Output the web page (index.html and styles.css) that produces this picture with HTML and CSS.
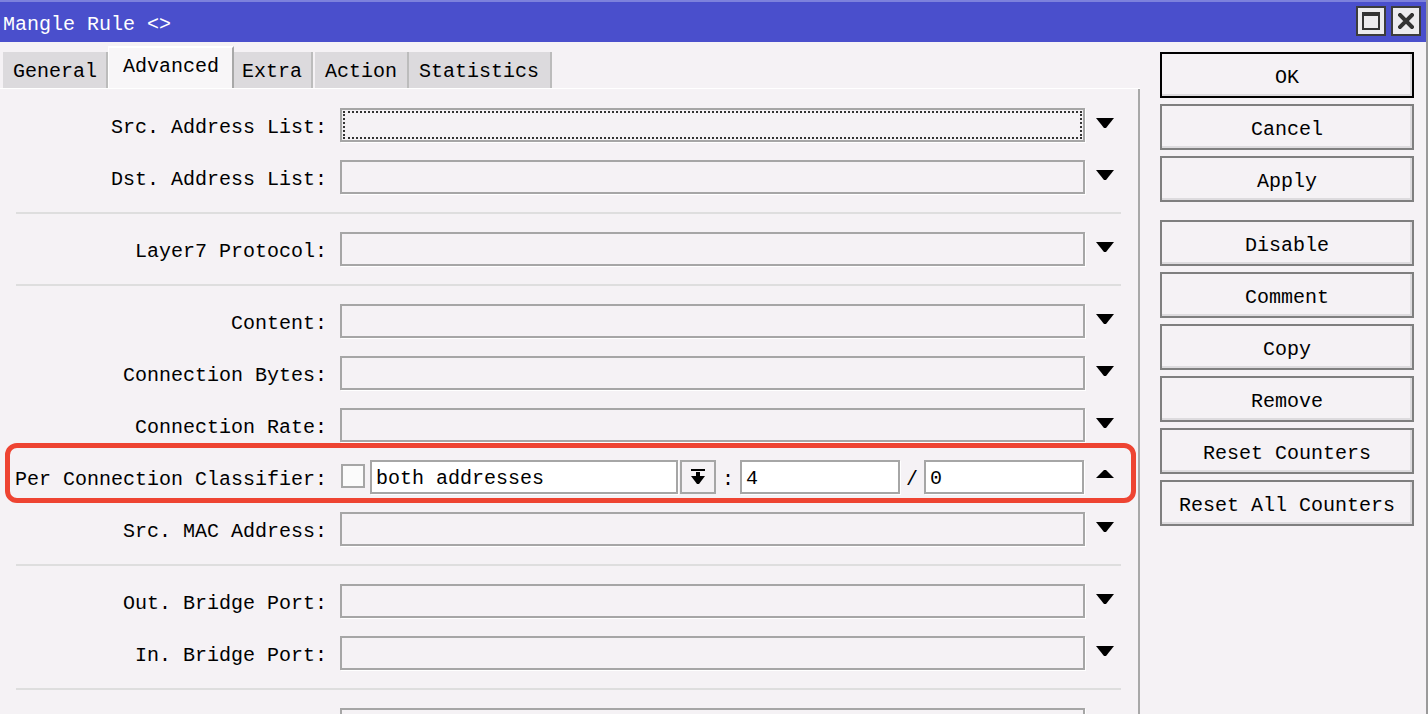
FILE: index.html
```html
<!DOCTYPE html>
<html>
<head>
<meta charset="utf-8">
<link rel="stylesheet" href="styles.css">
</head>
<body>
<div class="window">
  <div class="titlebar">
    <span class="title">Mangle Rule &lt;&gt;</span>
    <div class="winbtns">
      <div class="winbtn"><svg width="18" height="18" viewBox="0 0 18 18"><rect x="1" y="1" width="16" height="16" fill="none" stroke="#333" stroke-width="2"/><rect x="0" y="0" width="18" height="4" fill="#333"/></svg></div>
      <div class="winbtn"><svg width="16" height="16" viewBox="0 0 16 16"><path d="M2 2 L14 14 M14 2 L2 14" stroke="#333" stroke-width="4" stroke-linecap="square"/></svg></div>
    </div>
  </div>
  <div class="main">
    <div class="left">
      <div class="tabs">
        <div class="tab t-general">General</div>
        <div class="tab active t-adv">Advanced</div>
        <div class="tab t-extra">Extra</div>
        <div class="tab t-action">Action</div>
        <div class="tab t-stats">Statistics</div>
      </div>
      <div class="panel">
        <div class="row"><div class="label">Src. Address List:</div><div class="field focus"></div><svg class="arrow" width="18" height="10" viewBox="0 0 18 10"><polygon points="0,0 18,0 10,10 8,10" fill="#000"/></svg></div>
        <div class="row"><div class="label">Dst. Address List:</div><div class="field"></div><svg class="arrow" width="18" height="10" viewBox="0 0 18 10"><polygon points="0,0 18,0 10,10 8,10" fill="#000"/></svg></div>
        <div class="sep"></div>
        <div class="row"><div class="label">Layer7 Protocol:</div><div class="field"></div><svg class="arrow" width="18" height="10" viewBox="0 0 18 10"><polygon points="0,0 18,0 10,10 8,10" fill="#000"/></svg></div>
        <div class="sep"></div>
        <div class="row"><div class="label">Content:</div><div class="field"></div><svg class="arrow" width="18" height="10" viewBox="0 0 18 10"><polygon points="0,0 18,0 10,10 8,10" fill="#000"/></svg></div>
        <div class="row"><div class="label">Connection Bytes:</div><div class="field"></div><svg class="arrow" width="18" height="10" viewBox="0 0 18 10"><polygon points="0,0 18,0 10,10 8,10" fill="#000"/></svg></div>
        <div class="row"><div class="label">Connection Rate:</div><div class="field"></div><svg class="arrow" width="18" height="10" viewBox="0 0 18 10"><polygon points="0,0 18,0 10,10 8,10" fill="#000"/></svg></div>
        <div class="row pcc">
          <div class="label">Per Connection Classifier:</div>
          <div class="check"></div>
          <div class="field white sel">both addresses</div>
          <div class="dropbtn"><svg width="14" height="16" viewBox="0 0 14 16"><rect x="0" y="0" width="14" height="2" fill="#000"/><rect x="5" y="3" width="4" height="5" fill="#000"/><polygon points="0,7 14,7 8,15 6,15" fill="#000"/></svg></div>
          <span class="sepchar">:</span>
          <div class="field white num">4</div>
          <span class="sepchar">/</span>
          <div class="field white num">0</div>
          <svg class="arrow up" width="18" height="8" viewBox="0 0 18 8"><polygon points="8,0 10,0 18,8 0,8" fill="#000"/></svg>
          <div class="highlight"></div>
        </div>
        <div class="row"><div class="label">Src. MAC Address:</div><div class="field"></div><svg class="arrow" width="18" height="10" viewBox="0 0 18 10"><polygon points="0,0 18,0 10,10 8,10" fill="#000"/></svg></div>
        <div class="sep"></div>
        <div class="row"><div class="label">Out. Bridge Port:</div><div class="field"></div><svg class="arrow" width="18" height="10" viewBox="0 0 18 10"><polygon points="0,0 18,0 10,10 8,10" fill="#000"/></svg></div>
        <div class="row"><div class="label">In. Bridge Port:</div><div class="field"></div><svg class="arrow" width="18" height="10" viewBox="0 0 18 10"><polygon points="0,0 18,0 10,10 8,10" fill="#000"/></svg></div>
        <div class="sep"></div>
        <div class="row"><div class="label"></div><div class="field"></div></div>
      </div>
    </div>
    <div class="side">
      <div class="btn default">OK</div>
      <div class="btn">Cancel</div>
      <div class="btn">Apply</div>
      <div class="btn gap">Disable</div>
      <div class="btn">Comment</div>
      <div class="btn">Copy</div>
      <div class="btn">Remove</div>
      <div class="btn">Reset Counters</div>
      <div class="btn">Reset All Counters</div>
    </div>
  </div>
</div>
</body>
</html>
```
FILE: styles.css
```css
html, body {
  margin: 0;
  padding: 0;
  background: #f5f2f5;
  overflow: hidden;
}
body {
  font-family: "Liberation Mono", "DejaVu Sans Mono", monospace;
  font-size: 20px;
  color: #000;
}
.window {
  width: 1428px;
  height: 714px;
  box-sizing: border-box;
  border-right: 2px solid #9a9a9a;
  display: flex;
  flex-direction: column;
  overflow: hidden;
}
.titlebar {
  height: 42px;
  flex: none;
  box-sizing: border-box;
  background: #4a4fcc;
  border-top: 2px solid #7d81dc;
  display: flex;
  align-items: center;
  justify-content: space-between;
  padding: 0 5px 0 3px;
}
.title {
  color: #fff;
  line-height: 1;
  margin-top: 6px;
}
.winbtns {
  display: flex;
  gap: 5px;
  margin-top: -2px;
}
.winbtn {
  width: 30px;
  height: 30px;
  box-sizing: border-box;
  background: #ecebee;
  border: 2px solid #3c3c3c;
  display: flex;
  align-items: center;
  justify-content: center;
}
.main {
  flex: 1;
  display: flex;
  min-height: 0;
}
.left {
  width: 1140px;
  flex: none;
  display: flex;
  flex-direction: column;
}
.tabs {
  height: 47px;
  box-sizing: border-box;
  border-bottom: 1px solid #fff;
  display: flex;
  align-items: flex-end;
  padding-left: 3px;
  flex: none;
}
.tab {
  height: 36px;
  box-sizing: border-box;
  background: #dcdadd;
  border-right: 2px solid #bcbcbc;
  display: flex;
  align-items: center;
  padding: 4px 9px 0 10px;
  line-height: 1;
}
.tab.active {
  height: 42px;
  background: #f8f6f8;
  border-top: 2px solid #fff;
  border-left: 1px solid #fff;
  border-right: 2px solid #a8a8a8;
  padding: 0 13px 2px 14px;
}
.t-extra { margin-right: 2px; padding-left: 8px; }
.t-action { padding: 4px 10px 0 10px; }
.t-stats { padding: 4px 11px 0 10px; }
.panel {
  flex: 1;
  border-right: 2px solid #a8a8a8;
  padding-top: 10px;
  overflow: hidden;
}
.row {
  height: 52px;
  display: flex;
  align-items: center;
  position: relative;
}
.label {
  width: 327px;
  flex: none;
  text-align: right;
  white-space: pre;
  line-height: 1;
  padding-top: 5px;
}
.field {
  width: 745px;
  height: 34px;
  flex: none;
  box-sizing: border-box;
  margin-left: 13px;
  border: 2px solid #a6a6a6;
  box-shadow: 1px 1px 0 #fff;
  display: flex;
  align-items: center;
  padding: 4px 0 0 4px;
  line-height: 1;
}
.field.focus {
  outline: 2px dotted #333;
  outline-offset: -5px;
}
.field.white { background: #fff; }
.arrow {
  flex: none;
  margin-left: 11px;
  margin-top: -4px;
}
.arrow.up {
  margin-left: 12px;
  margin-top: -6px;
}
.sep {
  height: 2px;
  background: #dedede;
  margin: 9px 17px 9px 16px;
}
.check {
  width: 24px;
  height: 24px;
  box-sizing: border-box;
  margin-left: 14px;
  margin-top: -2px;
  border: 2px solid #a6a6a6;
  background: #fbfbfb;
  flex: none;
}
.field.sel {
  width: 308px;
  margin-left: 5px;
}
.dropbtn {
  width: 36px;
  height: 34px;
  box-sizing: border-box;
  margin-left: 2px;
  border: 2px solid #a6a6a6;
  display: flex;
  align-items: center;
  justify-content: center;
  flex: none;
}
.sepchar {
  width: 24px;
  text-align: center;
  flex: none;
  line-height: 1;
  padding-top: 5px;
}
.field.num {
  width: 160px;
  margin-left: 0;
}
.highlight {
  position: absolute;
  left: 5px;
  right: 2px;
  top: -8px;
  bottom: 0;
  border: 5px solid #ee4432;
  border-radius: 12px;
  pointer-events: none;
}
.side {
  width: 254px;
  flex: none;
  margin-left: 20px;
  padding-top: 10px;
  display: flex;
  flex-direction: column;
  gap: 6px;
}
.btn {
  height: 46px;
  box-sizing: border-box;
  border: 2px solid #7f7f7f;
  box-shadow: inset -2px -2px 0 #dddbde;
  display: flex;
  align-items: center;
  justify-content: center;
  line-height: 1;
  white-space: pre;
  padding-top: 5px;
}
.btn.default {
  border-color: #000;
}
.btn.gap {
  margin-top: 12px;
}
```
